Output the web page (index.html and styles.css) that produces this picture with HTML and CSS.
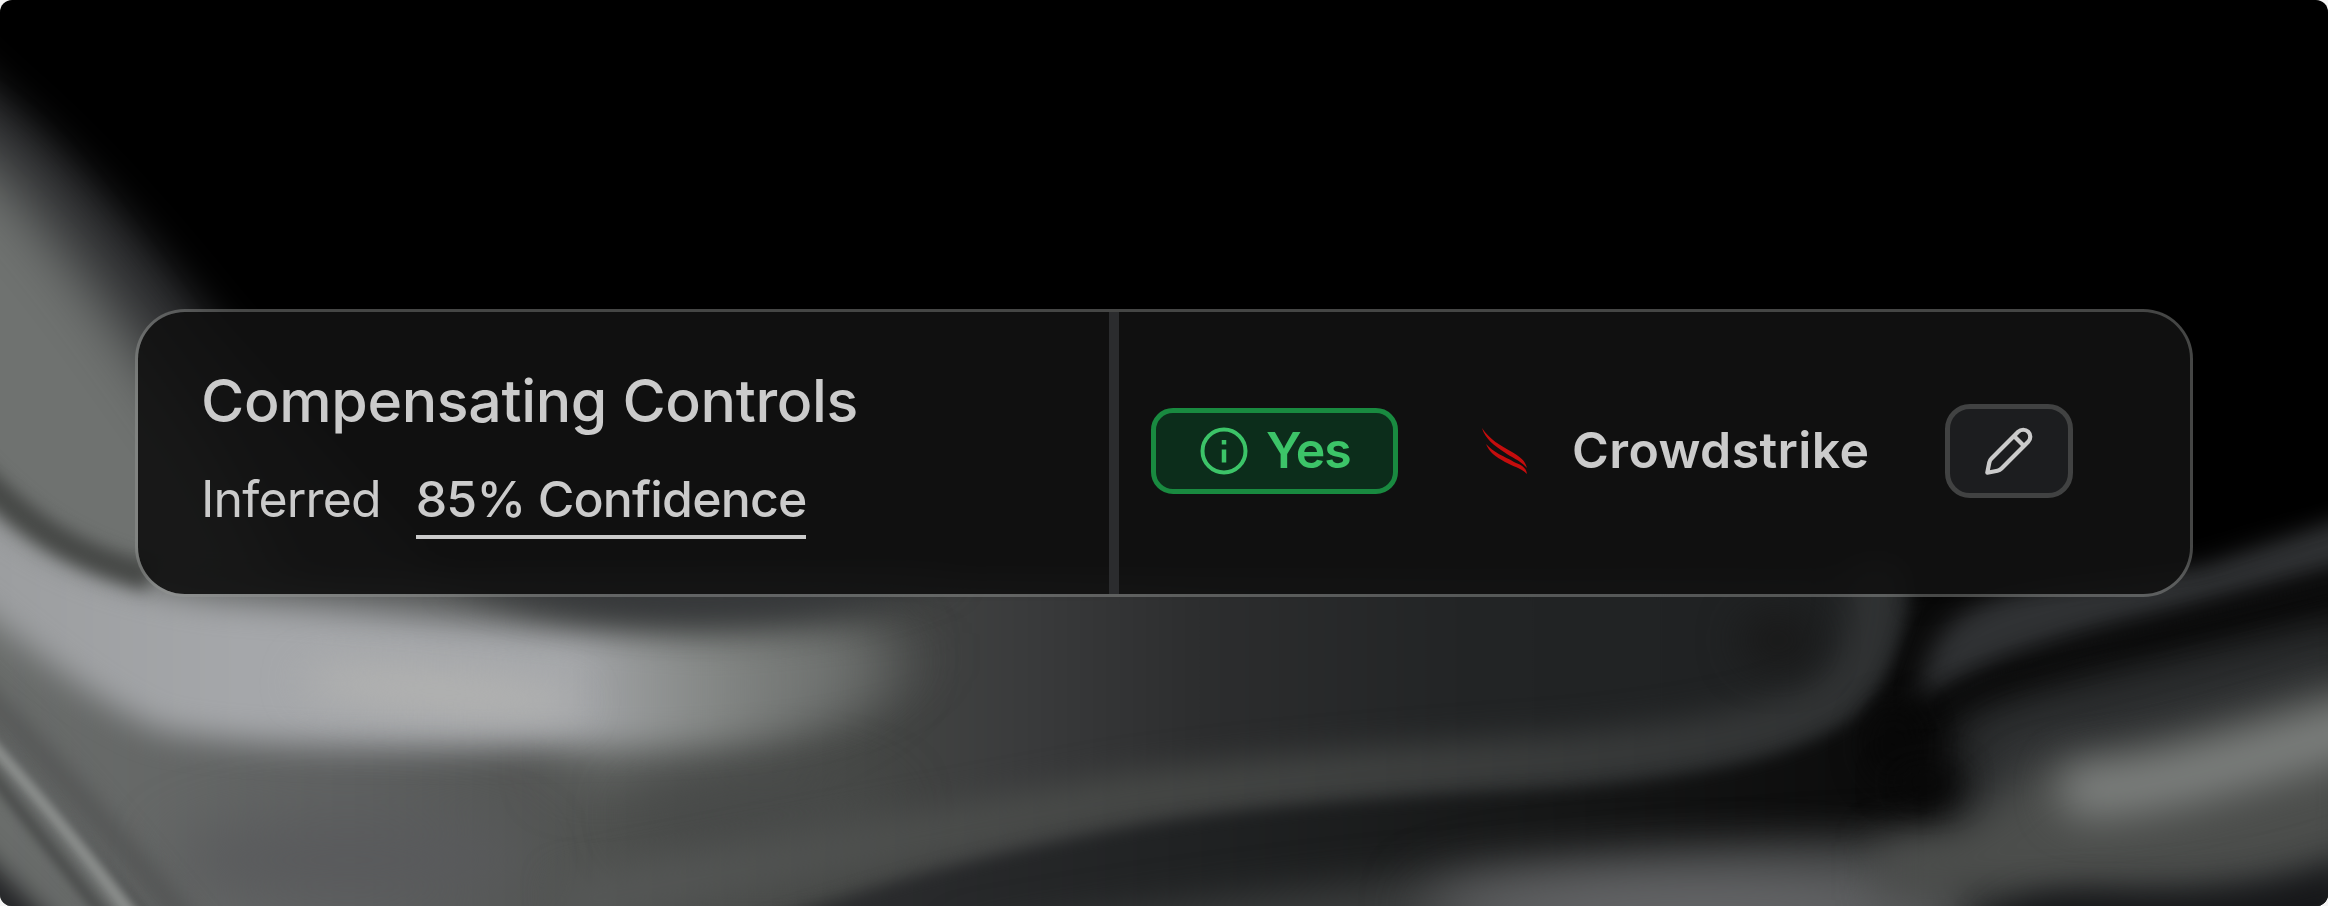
FILE: index.html
```
<!DOCTYPE html>
<html lang="en">
<head>
    <meta charset="UTF-8">
    <title>Compensating Controls</title>
    <link rel="stylesheet" href="styles.css">
</head>
<body>
    <main class="stage">
        <svg class="backdrop" viewBox="0 0 2328 906" preserveAspectRatio="none" aria-hidden="true">
            <defs>
                <linearGradient id="floor" x1="0" x2="1" y1="0" y2="0">
                    <stop offset="0" stop-color="#6c6f6d"/>
                    <stop offset=".2" stop-color="#5f6161"/>
                    <stop offset=".33" stop-color="#4f514f"/>
                    <stop offset=".45" stop-color="#454745"/>
                    <stop offset=".53" stop-color="#3a3b3c"/>
                    <stop offset=".62" stop-color="#2c2d2e"/>
                    <stop offset=".75" stop-color="#222425"/>
                    <stop offset="1" stop-color="#1e2021"/>
                </linearGradient>
                <linearGradient id="shine" gradientUnits="userSpaceOnUse" x1="0" x2="960" y1="0" y2="0">
                    <stop offset="0" stop-color="#9c9ea0"/>
                    <stop offset=".25" stop-color="#a5a7aa"/>
                    <stop offset=".6" stop-color="#a5a7aa"/>
                    <stop offset=".75" stop-color="#8c8f8d" stop-opacity=".7"/>
                    <stop offset=".88" stop-color="#747775" stop-opacity=".35"/>
                    <stop offset="1" stop-color="#5b5d5c" stop-opacity="0"/>
                </linearGradient>
                <linearGradient id="trough" gradientUnits="userSpaceOnUse" x1="800" x2="1900" y1="0" y2="0">
                    <stop offset="0" stop-color="#2c2d2f"/>
                    <stop offset=".35" stop-color="#202223"/>
                    <stop offset=".7" stop-color="#151616"/>
                    <stop offset="1" stop-color="#0b0b0b"/>
                </linearGradient>
                <linearGradient id="ridge" gradientUnits="userSpaceOnUse" x1="600" x2="1900" y1="0" y2="0">
                    <stop offset="0" stop-color="#555756"/>
                    <stop offset=".4" stop-color="#464846"/>
                    <stop offset="1" stop-color="#303233"/>
                </linearGradient>
            </defs>

            <!-- upper left fold -->
            <path class="b20" fill="#2b2c2e" d="M-80 20 L0 95 C70 155 140 230 215 325 L500 640 L-80 620Z"/>
            <path class="b30" fill="#6f7270" d="M-90 100 L0 170 C70 245 130 330 215 450 L300 620 L-90 620Z"/>

            <!-- floor -->
            <path class="b12" fill="url(#floor)" d="M-60 560 L150 580 L1980 570 L1915 640 L1890 720 L1880 960 L-60 960Z"/>
            <path class="b30" fill="#707371" d="M600 640 C700 620 830 615 900 650 C870 715 720 765 560 775Z"/>
            <ellipse class="b30" fill="#484a49" cx="760" cy="815" rx="130" ry="40"/>
            <ellipse class="b30" fill="#595a5c" cx="350" cy="860" rx="180" ry="40"/>

            <!-- bright band -->
            <path class="b16" fill="url(#shine)" d="M-60 470 L0 515 C60 565 130 588 220 600 C400 612 560 630 700 640 C800 640 920 620 980 640 C940 730 760 746 560 745 C400 749 250 748 160 730 C90 700 40 655 -60 580Z"/>
            <path class="b16" fill="#343638" d="M440 575 L960 575 C880 612 780 628 650 622 C570 617 500 604 440 575Z"/>
            <ellipse class="b20" fill="#b5b5b3" cx="440" cy="692" rx="140" ry="18" transform="rotate(5 440 692)"/>
            <path class="b8 line" stroke="#464846" stroke-width="28" d="M-60 435 C20 525 70 556 150 576"/>

            <!-- streaks in the lower left -->
            <path class="b12 line" stroke="#4b4c4c" stroke-width="16" d="M-40 670 C40 750 110 830 200 940"/>
            <path class="b5 line" stroke="#4f5151" stroke-width="20" d="M-40 705 L170 950"/>
            <path class="b5 line" stroke="#8b8e8c" stroke-width="15" d="M-40 710 C30 786 80 846 150 940"/>
            <path class="b5 line" stroke="#4c4e4d" stroke-width="12" d="M-40 735 L115 930"/>
            <path class="b12" fill="#242527" d="M-40 830 L65 935 L-40 960Z"/>

            <!-- long ridge and the trough under it -->
            <path class="b16 line" stroke="url(#ridge)" stroke-width="52" d="M560 905 C760 865 1000 822 1120 800 C1300 776 1450 768 1560 760 C1700 748 1800 728 1845 692 C1872 656 1877 630 1876 560"/>
            <ellipse class="b20" fill="#191919" cx="1778" cy="640" rx="38" ry="28"/>
            <path class="b8" fill="url(#trough)" d="M740 930 C900 876 1010 850 1150 825 C1300 802 1450 797 1570 790 C1700 778 1800 760 1860 715 C1895 675 1905 640 1918 570 L2340 500 L2340 940Z"/>
            <path class="b20" fill="#3a3c3c" d="M950 940 C1250 885 1480 872 1640 855 C1780 838 1900 835 1990 832 L2000 940 L1000 950Z"/>
            <ellipse class="b30" fill="#68696b" cx="1700" cy="908" rx="280" ry="40"/>

            <!-- right side folds -->
            <path class="b12" fill="#303234" d="M1922 690 C1932 615 1980 590 2100 578 L2200 566 L2360 512 L2360 570 L2150 626 L2010 668 L1922 708Z"/>
            <path class="b12" fill="#000" d="M1965 586 L2200 556 L2360 502 L2360 420 L1920 480 L1915 600Z"/>
            <path class="b20" fill="#27292a" d="M1955 715 C2120 662 2250 640 2360 615 L2360 960 L1975 960Z"/>
            <path class="b12 line" stroke="#070707" stroke-width="22" d="M1890 735 C1960 678 2080 642 2160 627 L2360 574"/>
            <path class="b30" fill="#353738" d="M1990 740 C2150 710 2250 690 2360 660 L2360 900 L1990 870Z"/>
            <path class="b20" fill="#4c4e4c" d="M1880 842 C1970 838 1995 800 2035 770 C2200 735 2260 715 2360 680 L2360 850 C2250 895 2100 890 1880 900Z"/>
            <path class="b20 line" stroke="#7e817f" stroke-width="54" stroke-linecap="round" d="M2085 790 C2160 788 2230 764 2370 724"/>
            <path class="b16" fill="#161719" d="M1985 930 C2010 893 2060 890 2120 894 C2220 899 2280 885 2350 862 L2350 950 L1980 950Z"/>
            <ellipse class="b16" fill="#080808" cx="1893" cy="745" rx="28" ry="40"/>
            <ellipse class="b16" fill="#080808" cx="1925" cy="782" rx="36" ry="16"/>
        </svg>

        <section class="card">
            <div class="info">
                <h1 class="title">Compensating Controls</h1>
                <p class="source">
                    <span class="inferred">Inferred</span>
                    <a class="confidence">85% Confidence</a>
                </p>
            </div>
            <div class="controls">
                <span class="badge">
                    <svg class="info-icon" viewBox="0 0 48 48" fill="none" stroke="currentColor">
                        <circle cx="24" cy="24" r="21.5" stroke-width="4"/>
                        <path d="M24 22.5V35.5" stroke-width="4.5"/>
                        <path d="M24 13V17.5" stroke-width="4.5"/>
                    </svg>
                    <span class="yes">Yes</span>
                </span>
                <svg class="falcon" viewBox="0 0 48 48" fill="#c40d0d">
                    <path d="M1 1C9 13 19 18 31 25C39 30 44 33 46 41C39 33 31 31 23 25C14 19 4 12 1 1Z"/>
                    <path d="M5 17C13 26 23 29 33 35C40 38 45 40 46 47C40 41 33 40 24 35C15 30 8 25 5 17Z"/>
                </svg>
                <span class="vendor">Crowdstrike</span>
                <button class="edit" aria-label="Edit">
                    <svg class="pencil" viewBox="0 0 48 48" fill="none" stroke="currentColor" stroke-width="4.2" stroke-linejoin="round">
                        <path d="M2.3 45.7L4.3 35.5Q4.8 33.2 6.5 31.5L33.2 4.8A7 7 0 0 1 43.2 14.8L16.5 41.5Q14.8 43.2 12.5 43.7Z"/>
                        <path d="M29 9L39 19"/>
                    </svg>
                </button>
            </div>
        </section>
    </main>
</body>
</html>
```
FILE: styles.css
```
* {
    box-sizing: border-box;
}
body {
    margin: 0;
    background: #f5f5f5;
    font-family: Inter, "Liberation Sans", sans-serif;
    color: #cbcbcb;
}
.stage {
    position: relative;
    display: flex;
    align-items: flex-start;
    width: 2328px;
    height: 906px;
    padding: 309px 135px 0;
    overflow: hidden;
    border-radius: 12px;
    background: #000;
}
.backdrop {
    position: absolute;
    inset: 0;
    width: 100%;
    height: 100%;
}
.line {
    fill: none;
}
.b5 { filter: blur(5px); }
.b8 { filter: blur(8px); }
.b12 { filter: blur(12px); }
.b16 { filter: blur(16px); }
.b20 { filter: blur(20px); }
.b30 { filter: blur(30px); }

.card {
    position: relative;
    display: flex;
    width: 2058px;
    height: 288px;
    border: 3px solid rgba(150, 152, 150, 0.46);
    border-radius: 50px;
    background: rgba(17, 17, 17, 0.93);
    background-clip: padding-box;
    overflow: hidden;
}
.info {
    width: 981px;
    padding: 54px 0 0 63px;
    border-right: 10px solid #2b2c2e;
}
.title {
    margin: 0;
    font-size: 59px;
    font-weight: 500;
    line-height: 70px;
    letter-spacing: -0.35px;
    white-space: nowrap;
}
.source {
    display: flex;
    align-items: flex-start;
    gap: 35px;
    margin: 33px 0 0;
    font-size: 50px;
    line-height: 60px;
    letter-spacing: -0.85px;
    white-space: nowrap;
}
.confidence {
    height: 70px;
    border-bottom: 4px solid #cbcbcb;
    font-weight: 500;
}
.controls {
    display: flex;
    flex: 1;
    align-items: center;
    padding: 0 0 5px 32px;
}
.badge {
    display: flex;
    align-items: center;
    width: 247px;
    height: 86px;
    padding-left: 44px;
    border: 5px solid #198a40;
    border-radius: 22px;
    background: #0c2d1b;
    color: #3cc468;
}
.info-icon {
    width: 48px;
    height: 48px;
    margin-right: 18px;
}
.yes,
.vendor {
    margin-top: -2px;
    font-size: 50px;
    font-weight: 600;
    line-height: 60px;
}
.yes {
    letter-spacing: -1px;
}
.falcon {
    width: 48px;
    height: 48px;
    margin-left: 83px;
}
.vendor {
    width: 296px;
    margin-left: 43px;
    letter-spacing: 0.4px;
    white-space: nowrap;
}
.edit {
    display: flex;
    align-items: center;
    justify-content: center;
    width: 128px;
    height: 94px;
    margin-left: 77px;
    padding: 0;
    border: 5px solid #414242;
    border-radius: 25px;
    background: #1c1d1f;
    color: #cbcbcb;
}
.pencil {
    width: 48px;
    height: 48px;
}
```
